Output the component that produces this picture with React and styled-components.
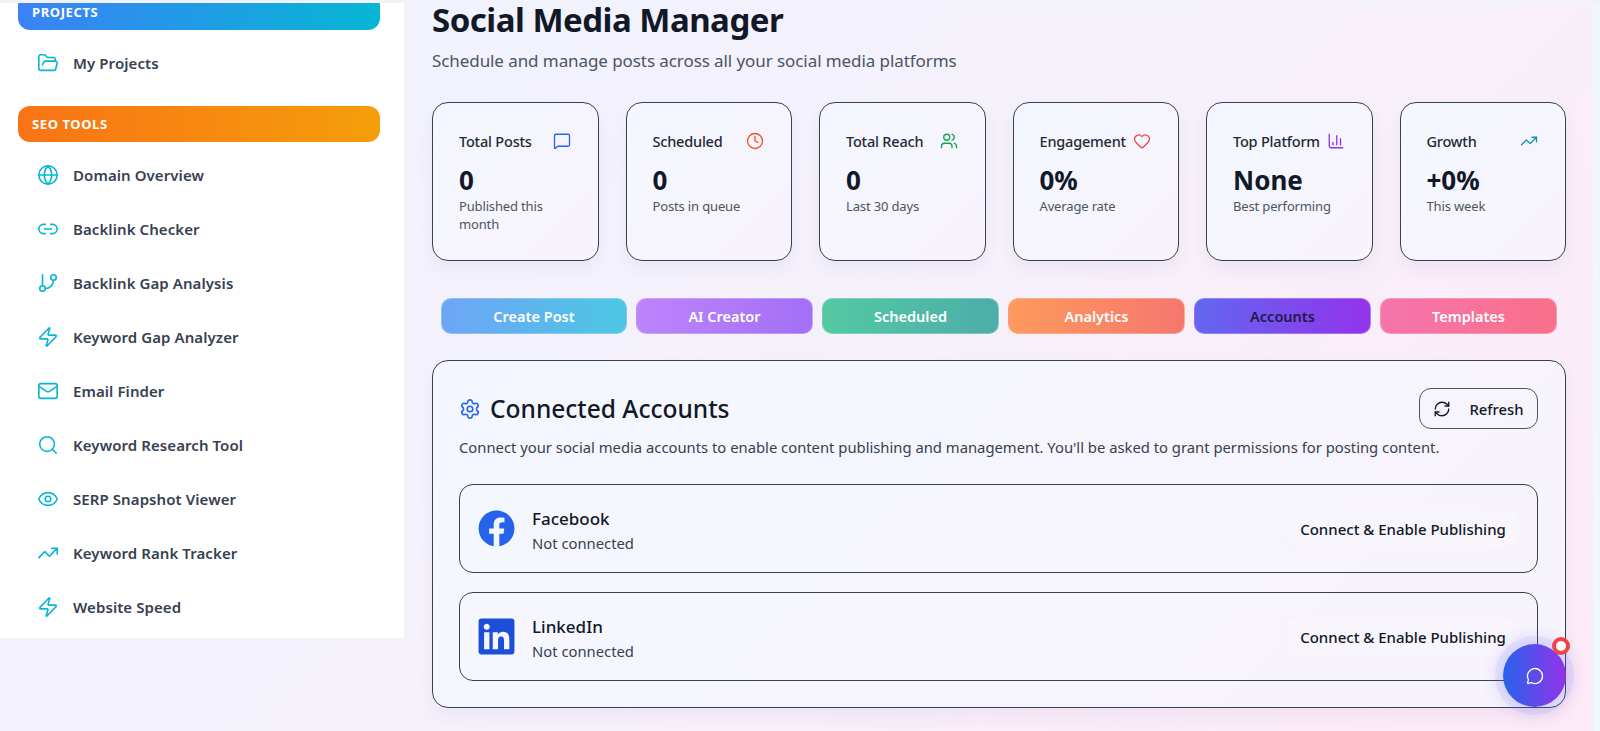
import styled, { createGlobalStyle } from "styled-components";
import {
  FolderOpen, Globe, Link2, GitBranch, Zap, Mail, Search, Eye, TrendingUp,
  MessageSquare, Clock, Users, Heart, ChartColumn, Settings, RefreshCw, MessageCircle,
} from "lucide-react";
import { FaFacebook, FaLinkedin } from "react-icons/fa";

const GlobalStyle = createGlobalStyle`
  html, body { margin: 0; padding: 0; height: 100%; overflow: hidden; }
  body { font-family: "Noto Sans", "Open Sans", sans-serif; color: #111827; }
  * { box-sizing: border-box; }
`;

const Page = styled.div`
  display: flex;
  align-items: flex-start;
  height: 731px;
  overflow: hidden;
  background: linear-gradient(135deg, #eff3fe 0%, #f5f1fb 50%, #fdeaf7 100%);
`;

const TopStrip = styled.div`
  position: fixed;
  top: 0;
  left: 0;
  right: 0;
  height: 3px;
  background: #f1f2fa;
  z-index: 5;
`;

const Sidebar = styled.aside`
  flex: 0 0 404px;
  height: 638px;
  background: #fff;
  padding: 0 24px 0 18px;
  overflow: hidden;
`;

const SectionBar = styled.div`
  height: 36px;
  margin-top: ${(p) => p.$top}px;
  padding: 0 14px;
  display: flex;
  align-items: center;
  border-radius: 12px;
  background: linear-gradient(90deg, ${(p) => p.$from}, ${(p) => p.$to});
  color: #fff;
  font-size: 13px;
  font-weight: 700;
  letter-spacing: 0.6px;
`;

const NavList = styled.nav`
  display: flex;
  flex-direction: column;
  margin-top: ${(p) => p.$top}px;
`;

const NavItem = styled.a`
  height: 54px;
  padding-left: 19px;
  display: flex;
  align-items: center;
  gap: 14px;
  color: #374151;
  font-size: 15px;
  font-weight: 600;
  letter-spacing: 0.08px;
  svg { color: #06b6d4; flex: none; }
`;

const Main = styled.main`
  flex: 1;
  min-width: 0;
  padding: 0 27px 0 28px;
`;

const Edge = styled.div`
  flex: 0 0 7px;
  height: 731px;
  background: #eff6fe;
`;

const Title = styled.h1`
  margin: 0;
  font-size: 33px;
  line-height: 40px;
  font-weight: 700;
  letter-spacing: -0.5px;
  color: #111827;
`;

const Subtitle = styled.p`
  margin: 9px 0 0;
  font-size: 17px;
  line-height: 24px;
  letter-spacing: -0.08px;
  color: #4b5563;
`;

const StatGrid = styled.section`
  display: grid;
  grid-template-columns: repeat(6, 1fr);
  gap: 27px;
  margin-top: 29px;
`;

const StatCard = styled.div`
  height: 159px;
  padding: 26px 27px 26px 26px;
  border: 1px solid #374151;
  border-radius: 16px;
  background: linear-gradient(135deg, #f4f7ff, #f8f3fc);
  box-shadow: 0 8px 16px rgba(80, 60, 120, 0.06);
`;

const StatHead = styled.div`
  display: flex;
  justify-content: space-between;
  align-items: center;
  height: 24px;
  font-size: 14.5px;
  font-weight: 500;
  letter-spacing: -0.2px;
  color: #1f2937;
  svg { color: ${(p) => p.$color}; flex: none; }
`;

const StatValue = styled.div`
  margin-top: 11px;
  font-size: 26px;
  line-height: 32px;
  font-weight: 700;
  color: #111827;
`;

const StatNote = styled.div`
  margin-top: 1px;
  font-size: 13px;
  line-height: 18px;
  letter-spacing: -0.15px;
  color: #4b5563;
`;

const Tabs = styled.div`
  display: grid;
  grid-template-columns: 186px repeat(5, 1fr);
  gap: 9px;
  margin: 37px 9px 0;
`;

const Tab = styled.button`
  height: 36px;
  border: 1px solid rgba(255, 255, 255, 0.25);
  border-radius: 10px;
  background: linear-gradient(90deg, ${(p) => p.$from}, ${(p) => p.$to});
  color: ${(p) => (p.$active ? "#1e1b4b" : "#fff")};
  font-family: inherit;
  font-size: 14.5px;
  font-weight: 600;
`;

const Panel = styled.section`
  margin-top: 26px;
  height: 348px;
  padding: 27px 27px 27px 26px;
  border: 1px solid #374151;
  border-radius: 16px;
  background: linear-gradient(135deg, #f4f7ff, #f8f3fc);
  box-shadow: 0 8px 16px rgba(80, 60, 120, 0.06);
`;

const PanelHead = styled.div`
  display: flex;
  justify-content: space-between;
  align-items: center;
`;

const PanelTitle = styled.h2`
  margin: 0;
  display: flex;
  align-items: center;
  gap: 9px;
  font-size: 24.5px;
  line-height: 32px;
  font-weight: 500;
  color: #111827;
  svg { color: #2563eb; }
`;

const RefreshButton = styled.button`
  width: 119px;
  height: 41px;
  display: flex;
  align-items: center;
  justify-content: center;
  gap: 18px;
  border: 1px solid #4b5563;
  border-radius: 12px;
  background: transparent;
  color: #111827;
  font-family: inherit;
  font-size: 14.8px;
  font-weight: 500;
`;

const PanelText = styled.p`
  margin: 7px 0 0;
  font-size: 14.8px;
  line-height: 22px;
  color: #374151;
`;

const AccountList = styled.div`
  display: flex;
  flex-direction: column;
  gap: 19px;
  margin-top: 26px;
`;

const AccountRow = styled.div`
  height: 89px;
  padding: 0 17px 0 18px;
  display: flex;
  align-items: center;
  border: 1px solid #374151;
  border-radius: 14px;
`;

const BrandIcon = styled.span`
  width: 36px;
  height: 36px;
  display: flex;
  align-items: center;
  justify-content: center;
  color: ${(p) => p.$color};
  svg { flex: none; }
`;

const AccountInfo = styled.div`
  flex: 1;
  margin: 4px 0 0 18px;
`;

const AccountName = styled.div`
  font-size: 17px;
  line-height: 24px;
  font-weight: 500;
  color: #111827;
`;

const AccountStatus = styled.div`
  font-size: 14.8px;
  line-height: 24px;
  color: #374151;
`;

const ConnectButton = styled.button`
  width: 234px;
  height: 39px;
  border: 0;
  border-radius: 12px;
  background: rgba(255, 255, 255, 0.16);
  box-shadow: 0 0 2px rgba(120, 100, 160, 0.07);
  color: #111827;
  font-family: inherit;
  font-size: 15px;
  font-weight: 500;
`;

const ChatButton = styled.button`
  position: fixed;
  left: 1503px;
  top: 644px;
  width: 63px;
  height: 63px;
  display: flex;
  align-items: center;
  justify-content: center;
  border: 0;
  border-radius: 50%;
  background: linear-gradient(90deg, #2563eb, #9333ea);
  box-shadow: 0 0 0 8px rgba(99, 102, 241, 0.1), 0 0 14px 10px rgba(99, 102, 241, 0.12);
  color: #fff;
`;

const ChatBadge = styled.span`
  position: absolute;
  right: -4px;
  top: -7px;
  width: 18px;
  height: 18px;
  border-radius: 50%;
  background: #fff;
  border: 4px solid #ef4444;
`;

const seoTools = [
  ["Domain Overview", Globe],
  ["Backlink Checker", Link2],
  ["Backlink Gap Analysis", GitBranch],
  ["Keyword Gap Analyzer", Zap],
  ["Email Finder", Mail],
  ["Keyword Research Tool", Search],
  ["SERP Snapshot Viewer", Eye],
  ["Keyword Rank Tracker", TrendingUp],
  ["Website Speed", Zap],
];

const stats = [
  ["Total Posts", MessageSquare, "#2563eb", "0", "Published this month"],
  ["Scheduled", Clock, "#f4511e", "0", "Posts in queue"],
  ["Total Reach", Users, "#16a34a", "0", "Last 30 days"],
  ["Engagement", Heart, "#ef4444", "0%", "Average rate"],
  ["Top Platform", ChartColumn, "#9333ea", "None", "Best performing"],
  ["Growth", TrendingUp, "#0891b2", "+0%", "This week"],
];

const tabs = [
  ["Create Post", "#6ea5f7", "#4cc7e3"],
  ["AI Creator", "#bd84fc", "#a36ff5"],
  ["Scheduled", "#53c9a2", "#4dadaa"],
  ["Analytics", "#fd9a5c", "#f5776f"],
  ["Accounts", "#6366f1", "#9333ea", true],
  ["Templates", "#f574ac", "#f9708a"],
];

const accounts = [
  ["Facebook", FaFacebook, "#2563eb", 37],
  ["LinkedIn", FaLinkedin, "#1d4ed8", 41],
];

export default function App() {
  return (
    <Page>
      <GlobalStyle />
      <TopStrip />
      <Sidebar>
        <SectionBar $top={-6} $from="#3b82f6" $to="#06b6d4">PROJECTS</SectionBar>
        <NavList $top={6}>
          <NavItem><FolderOpen size={22} strokeWidth={1.75} />My Projects</NavItem>
        </NavList>
        <SectionBar $top={16} $from="#f97316" $to="#f59e0b">SEO TOOLS</SectionBar>
        <NavList $top={6}>
          {seoTools.map(([label, Icon]) => (
            <NavItem key={label}><Icon size={22} strokeWidth={1.75} />{label}</NavItem>
          ))}
        </NavList>
      </Sidebar>
      <Main>
        <Title>Social Media Manager</Title>
        <Subtitle>Schedule and manage posts across all your social media platforms</Subtitle>
        <StatGrid>
          {stats.map(([label, Icon, color, value, note]) => (
            <StatCard key={label}>
              <StatHead $color={color}>{label}<Icon size={18} strokeWidth={1.75} /></StatHead>
              <StatValue>{value}</StatValue>
              <StatNote>{note}</StatNote>
            </StatCard>
          ))}
        </StatGrid>
        <Tabs>
          {tabs.map(([label, from, to, active]) => (
            <Tab key={label} $from={from} $to={to} $active={active}>{label}</Tab>
          ))}
        </Tabs>
        <Panel>
          <PanelHead>
            <PanelTitle><Settings size={22} strokeWidth={1.75} />Connected Accounts</PanelTitle>
            <RefreshButton><RefreshCw size={18} strokeWidth={1.75} />Refresh</RefreshButton>
          </PanelHead>
          <PanelText>
            Connect your social media accounts to enable content publishing and management. You'll be asked to grant permissions for posting content.
          </PanelText>
          <AccountList>
            {accounts.map(([name, Icon, color, size]) => (
              <AccountRow key={name}>
                <BrandIcon $color={color}><Icon size={size} /></BrandIcon>
                <AccountInfo>
                  <AccountName>{name}</AccountName>
                  <AccountStatus>Not connected</AccountStatus>
                </AccountInfo>
                <ConnectButton>Connect &amp; Enable Publishing</ConnectButton>
              </AccountRow>
            ))}
          </AccountList>
        </Panel>
      </Main>
      <Edge />
      <ChatButton>
        <MessageCircle size={18} strokeWidth={1.75} />
        <ChatBadge />
      </ChatButton>
    </Page>
  );
}
